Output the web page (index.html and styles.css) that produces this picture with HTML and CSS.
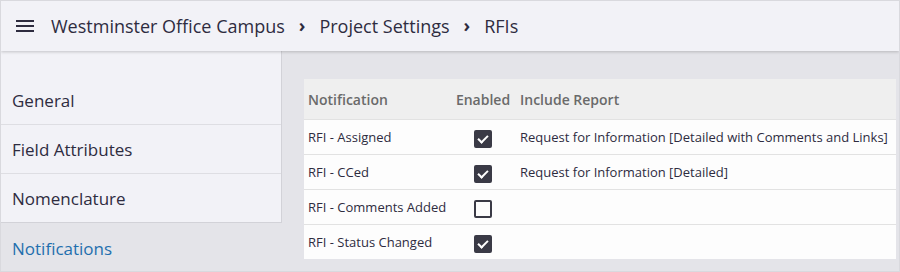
FILE: index.html
```html
<!DOCTYPE html>
<html lang="en">
<head>
    <meta charset="UTF-8">
    <title>RFIs - Project Settings</title>
    <link rel="stylesheet" href="styles.css">
</head>
<body>
<div class="frame">

    <!-- Kopfzeile -->
    <header class="topbar">
        <svg class="menu-icon" width="18" height="12" viewBox="0 0 18 12">
            <rect x="0" y="0" width="18" height="2" fill="#2e2c3f"/>
            <rect x="0" y="5" width="18" height="2" fill="#2e2c3f"/>
            <rect x="0" y="10" width="18" height="2" fill="#2e2c3f"/>
        </svg>
        <span class="crumb">Westminster Office Campus</span>
        <span class="sep">&#8250;</span>
        <span class="crumb">Project Settings</span>
        <span class="sep">&#8250;</span>
        <span class="crumb">RFIs</span>
    </header>

    <div class="main">
        <!-- Seitenmenue -->
        <nav class="sidebar">
            <div class="side-list">
                <div class="side-item">General</div>
                <div class="side-item">Field Attributes</div>
                <div class="side-item">Nomenclature</div>
            </div>
            <div class="side-item active">Notifications</div>
        </nav>

        <!-- Tabelle -->
        <div class="content">
            <table class="notify">
                <thead>
                    <tr>
                        <th class="col-name">Notification</th>
                        <th class="col-on">Enabled</th>
                        <th>Include Report</th>
                    </tr>
                </thead>
                <tbody>
                    <tr>
                        <td>RFI - Assigned</td>
                        <td class="col-on"><span class="box checked"></span></td>
                        <td>Request for Information [Detailed with Comments and Links]</td>
                    </tr>
                    <tr>
                        <td>RFI - CCed</td>
                        <td class="col-on"><span class="box checked"></span></td>
                        <td>Request for Information [Detailed]</td>
                    </tr>
                    <tr>
                        <td>RFI - Comments Added</td>
                        <td class="col-on"><span class="box"></span></td>
                        <td></td>
                    </tr>
                    <tr>
                        <td>RFI - Status Changed</td>
                        <td class="col-on"><span class="box checked"></span></td>
                        <td></td>
                    </tr>
                </tbody>
            </table>
        </div>
    </div>

</div>
</body>
</html>
```

FILE: styles.css
```css
body {
    margin: 0;
    padding: 0;
    font-family: "Open Sans", "Noto Sans", sans-serif;
    color: #2e2c3f;
    background-color: #d9d9de;
}

.frame {
    width: 898px;
    height: 270px;
    margin: 1px;
    background-color: #e4e4e9;
    display: flex;
    flex-direction: column;
    overflow: hidden;
}

.topbar {
    height: 50px;
    flex-shrink: 0;
    display: flex;
    align-items: center;
    padding-left: 15px;
    background-color: #f2f2f7;
    box-shadow: 0 1px 3px rgba(0, 0, 0, 0.2);
    position: relative;
    z-index: 1;
    font-size: 18px;
}

.menu-icon {
    margin-right: 17px;
}

.sep {
    font-size: 18px;
    font-weight: bold;
    margin: 0 14px 2px 14px;
}

.main {
    flex: 1;
    display: flex;
    min-height: 0;
}

.sidebar {
    width: 281px;
    flex-shrink: 0;
    display: flex;
    flex-direction: column;
}

.side-list {
    background-color: #f2f2f7;
    border-right: 1px solid #d2d2d8;
    border-bottom: 1px solid #d2d2d8;
    padding-top: 25px;
}

.side-item {
    height: 48px;
    line-height: 50px;
    padding-left: 11px;
    font-size: 17px;
    border-bottom: 1px solid #dedee3;
}

.side-list .side-item:last-child {
    border-bottom: none;
}

.side-item.active {
    color: #1f6fae;
    border-bottom: none;
    line-height: 52px;
}

.content {
    flex: 1;
    padding: 28px 3px 0 22px;
}

.notify {
    width: 100%;
    border-collapse: collapse;
    background-color: #fdfdfd;
    font-size: 13px;
}

.notify th {
    height: 40px;
    background-color: #efefef;
    color: #6a6a6a;
    font-weight: 600;
    font-size: 14px;
    text-align: left;
    padding: 0 0 0 4px;
}

.notify td {
    height: 34px;
    padding: 0 0 0 4px;
    border-top: 1px solid #e2e2e2;
}

.notify .col-name {
    width: 146px;
}

.notify .col-on {
    width: 58px;
    text-align: center;
    padding: 0 4px 0 0;
}

.box {
    display: inline-block;
    width: 14px;
    height: 14px;
    border: 2px solid #3a3a46;
    border-radius: 2px;
    vertical-align: middle;
    position: relative;
    top: 1px;
}

.box.checked {
    background-color: #3a3a46;
}

.box.checked::after {
    content: "";
    position: absolute;
    left: 4px;
    top: 1px;
    width: 4px;
    height: 8px;
    border: solid #fff;
    border-width: 0 2px 2px 0;
    transform: rotate(45deg);
}
```
